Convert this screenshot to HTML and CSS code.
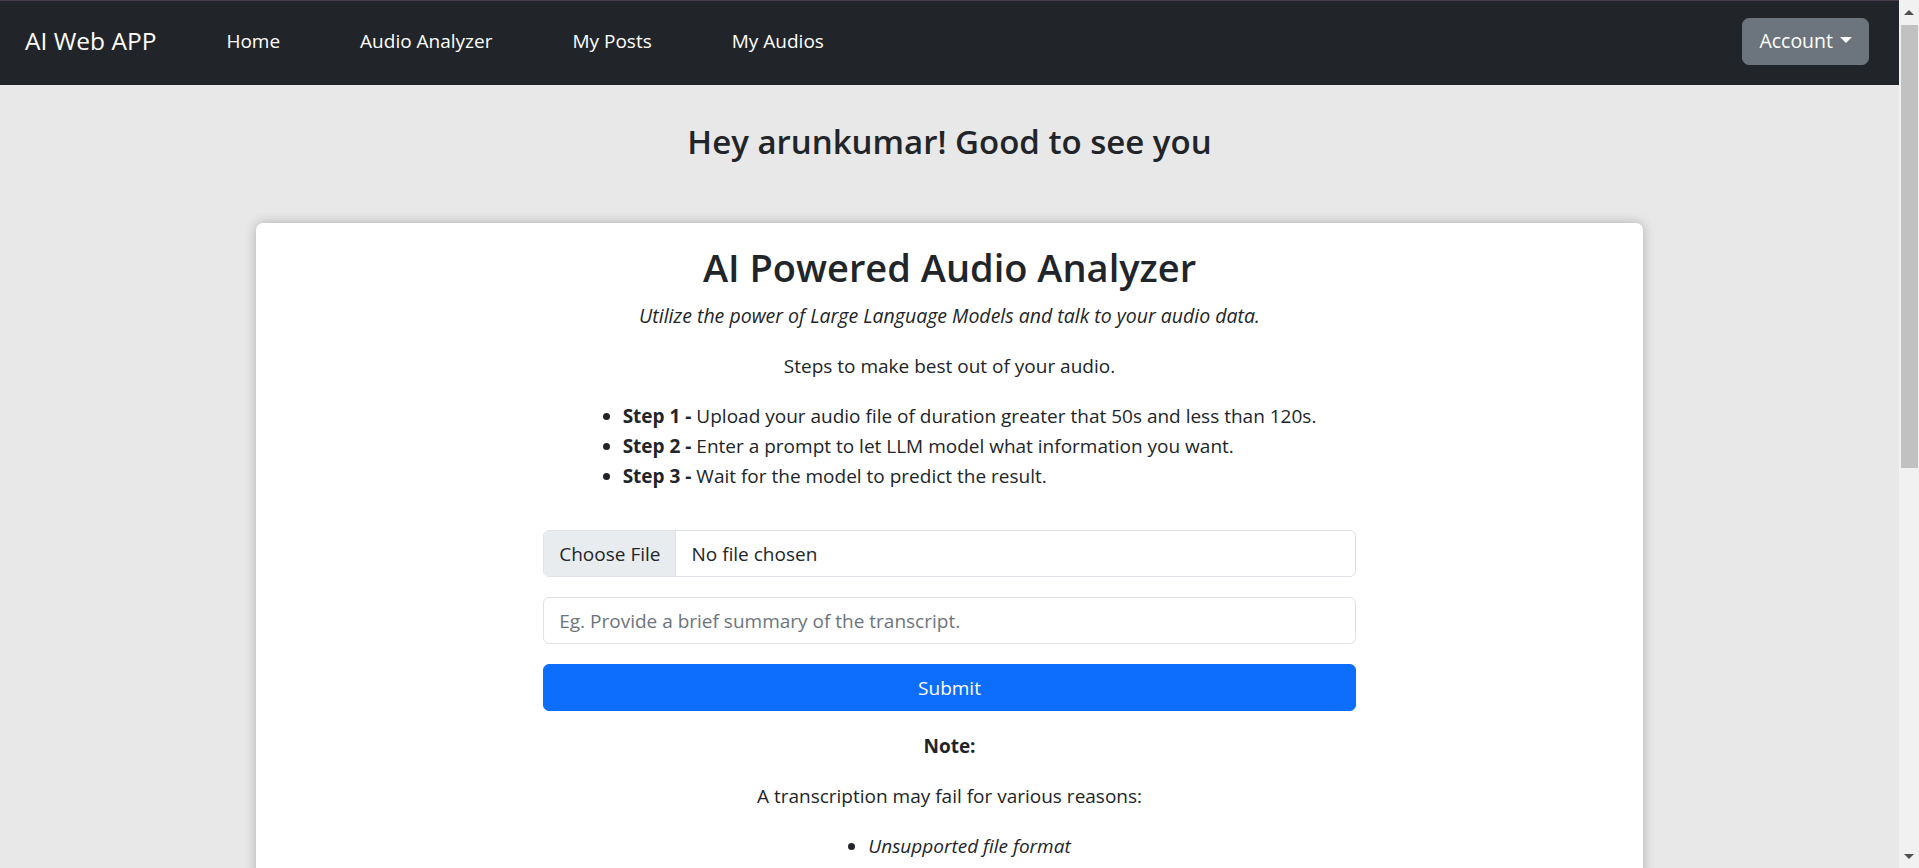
FILE: index.html
```html
<!DOCTYPE html>
<html lang="en">
<head>
<meta charset="utf-8">
<title>AI Web APP</title>
<link rel="stylesheet" href="styles.css">
</head>
<body>
<div class="app">
  <nav class="navbar">
    <a class="brand" href="#">AI Web APP</a>
    <ul class="nav-links">
      <li><a href="#">Home</a></li>
      <li><a href="#">Audio Analyzer</a></li>
      <li><a href="#">My Posts</a></li>
      <li><a href="#">My Audios</a></li>
    </ul>
    <button class="account-btn" type="button">Account<span class="caret"></span></button>
  </nav>
  <main class="page">
    <h3 class="greeting">Hey arunkumar! Good to see you</h3>
    <section class="card">
      <h2 class="card-title">AI Powered Audio Analyzer</h2>
      <p class="subtitle"><em>Utilize the power of Large Language Models and talk to your audio data.</em></p>
      <p class="text">Steps to make best out of your audio.</p>
      <ul class="steps">
        <li><strong>Step 1 -</strong> Upload your audio file of duration greater that 50s and less than 120s.</li>
        <li><strong>Step 2 -</strong> Enter a prompt to let LLM model what information you want.</li>
        <li><strong>Step 3 -</strong> Wait for the model to predict the result.</li>
      </ul>
      <form class="analyzer-form">
        <input class="control file-control" type="file" accept="audio/*">
        <input class="control" type="text" placeholder="Eg. Provide a brief summary of the transcript.">
        <button class="submit-btn" type="button">Submit</button>
      </form>
      <p class="text"><strong>Note:</strong></p>
      <p class="text">A transcription may fail for various reasons:</p>
      <ul class="reasons">
        <li><em>Unsupported file format</em></li>
        <li><em>Audio too short</em></li>
        <li><em>Audio too long</em></li>
      </ul>
    </section>
  </main>
</div>
<div class="scrollbar" aria-hidden="true">
  <div class="sb-btn"><span class="sb-arrow up"></span></div>
  <div class="sb-track"><div class="sb-thumb"></div></div>
  <div class="sb-btn"><span class="sb-arrow down"></span></div>
</div>
</body>
</html>
```

FILE: styles.css
```css
* {
  box-sizing: border-box;
}

html,
body {
  margin: 0;
}

body {
  display: grid;
  grid-template-columns: minmax(0, 1fr) 20px;
  font-family: "Open Sans", "Noto Sans", "Liberation Sans", sans-serif;
  font-size: 19px;
  line-height: 30px;
  color: #212529;
  background: #e8e8e8;
}

/* ---------- fake window scrollbar ---------- */
.scrollbar {
  position: sticky;
  top: 0;
  align-self: start;
  display: flex;
  flex-direction: column;
  height: 100vh;
  background: #f1f1f1;
}

.sb-btn {
  display: flex;
  align-items: center;
  justify-content: center;
  height: 21px;
  flex: none;
}

.sb-arrow {
  width: 0;
  height: 0;
  border-left: 5px solid transparent;
  border-right: 5px solid transparent;
}

.sb-arrow.up {
  border-bottom: 5px solid #505050;
  margin-top: 3px;
}

.sb-arrow.down {
  border-top: 5px solid #505050;
  margin-bottom: 3px;
}

.sb-track {
  flex: 1;
}

.sb-thumb {
  height: 443px;
  margin: 4px 1px 0 2px;
  background: #c1c1c1;
}

/* ---------- navbar ---------- */
.navbar {
  display: flex;
  align-items: center;
  height: 85px;
  padding: 0 30px 4px 25px;
  border-top: 1px solid #463a4b;
  background: #212529;
}

.brand {
  color: #fff;
  font-size: 24.5px;
  line-height: 36px;
  text-decoration: none;
  margin-right: 30px;
}

.nav-links {
  display: flex;
  list-style: none;
  margin: 0;
  padding: 0;
}

.nav-links a {
  display: block;
  padding: 10px 40px;
  color: #fff;
  text-decoration: none;
  font-size: 19px;
  line-height: 30px;
}

.account-btn {
  margin-left: auto;
  padding: 7.5px 16px;
  border: 1px solid #6c757d;
  border-radius: 7px;
  background: #6c757d;
  color: #fff;
  font: inherit;
  font-size: 19.5px;
  line-height: 30px;
}

.caret {
  display: inline-block;
  margin-left: 7px;
  vertical-align: 5px;
  border-top: 6px solid #fff;
  border-left: 6px solid transparent;
  border-right: 6px solid transparent;
}

/* ---------- page ---------- */
.page {
  padding: 36px 0 40px;
}

.greeting {
  margin: 0 0 60px;
  text-align: center;
  font-size: 33px;
  font-weight: 600;
  line-height: 42px;
}

.card {
  display: flex;
  flex-direction: column;
  align-items: center;
  width: 1387px;
  min-height: 1342px;
  margin: 0 auto;
  padding: 20px;
  background: #fff;
  border-radius: 7px;
  box-shadow: 0 0 12px rgba(0, 0, 0, 0.25);
  text-align: center;
}

.card-title {
  margin: 0 0 10px;
  font-size: 38px;
  font-weight: 600;
  line-height: 48px;
}

.subtitle,
.text {
  margin: 0 0 20px;
}

.subtitle {
  font-size: 19.5px;
}

.steps,
.reasons {
  margin: 0;
  padding-left: 40px;
  text-align: left;
}

.reasons {
  margin-bottom: 20px;
}

.analyzer-form {
  display: flex;
  flex-direction: column;
  gap: 20px;
  width: 812.5px;
  margin: 39px 0 20px;
}

.control {
  display: block;
  width: 100%;
  padding: 7.5px 15px;
  border: 1px solid #dee2e6;
  border-radius: 6px;
  background: #fff;
  color: #212529;
  font: inherit;
  line-height: 30px;
}

.control::placeholder {
  color: #6c757d;
}

.file-control::file-selector-button {
  margin: -7.5px 15px -7.5px -15px;
  padding: 7.5px 15px;
  border: 0;
  border-right: 1px solid #dee2e6;
  border-radius: 0;
  background: #e9ecef;
  color: #212529;
  font: inherit;
}

.submit-btn {
  width: 100%;
  padding: 7.5px 15px;
  border: 1px solid #0d6efd;
  border-radius: 6px;
  background: #0d6efd;
  color: #fff;
  font: inherit;
  line-height: 30px;
}
```
